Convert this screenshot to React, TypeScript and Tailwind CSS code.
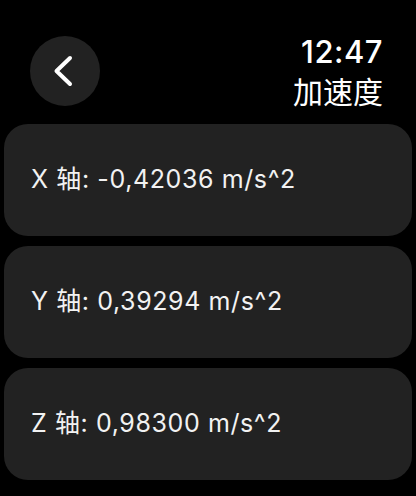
const rows = [
  { axis: "X", value: "-0,42036" },
  { axis: "Y", value: "0,39294" },
  { axis: "Z", value: "0,98300" },
]

export default function App() {
  return (
    <div
      className="h-[496px] w-[416px] overflow-hidden bg-black text-white"
      style={{ fontFamily: 'Inter, "Noto Sans CJK SC", sans-serif' }}
    >
      <header className="flex h-[124px] items-start justify-between pl-[30px] pr-[33px] pt-[36px]">
        <button className="flex size-[70px] items-center justify-center rounded-full bg-[#222222]">
          <svg width="70" height="70" viewBox="0 0 70 70" fill="none">
            <path
              d="M40 22 L26.5 35 L40 48"
              stroke="white"
              strokeWidth="4"
              strokeLinecap="round"
              strokeLinejoin="round"
            />
          </svg>
        </button>
        <div className="flex flex-col items-end">
          <span className="text-[31px] font-medium leading-[32px] tracking-[0.5px]">12:47</span>
          <span className="mt-[7px] text-[30px] font-normal leading-[34px]">加速度</span>
        </div>
      </header>

      <div className="flex flex-col gap-[10px] px-[4px]">
        {rows.map((r) => (
          <div
            key={r.axis}
            className="flex h-[112px] items-center rounded-[24px] bg-[#222222] pl-[27px]"
          >
            <span className="text-[25px] tracking-[0.6px] text-[#f2f2f2]">
              {r.axis} 轴: {r.value} m/s^2
            </span>
          </div>
        ))}
      </div>
    </div>
  )
}
